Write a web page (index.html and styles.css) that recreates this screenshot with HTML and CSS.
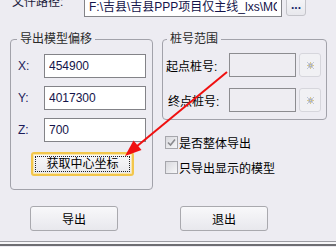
FILE: index.html
```html
<!DOCTYPE html>
<html lang="zh-CN">
<head>
    <meta charset="UTF-8">
    <title>导出模型</title>
    <link rel="stylesheet" href="styles.css">
</head>
<body>
    <div class="dialog">
        <div class="path-row">
            <span class="path-label">文件路径:</span>
            <input class="field path-field" type="text" value="F:\吉县\吉县PPP项目仅主线_lxs\MODEL\" readonly>
            <button class="btn browse">...</button>
        </div>
        <div class="groups">
            <fieldset class="group offset">
                <legend>导出模型偏移</legend>
                <div class="coord-row">
                    <span class="axis">X:</span>
                    <input class="field coord" type="text" value="454900">
                </div>
                <div class="coord-row">
                    <span class="axis">Y:</span>
                    <input class="field coord" type="text" value="4017300">
                </div>
                <div class="coord-row">
                    <span class="axis">Z:</span>
                    <input class="field coord" type="text" value="700">
                </div>
                <button class="btn focused center-btn"><span class="focus-ring">获取中心坐标</span></button>
            </fieldset>
            <div class="side">
                <fieldset class="group range">
                    <legend>桩号范围</legend>
                    <div class="range-row">
                        <span class="range-label">起点桩号:</span>
                        <input class="field range-field" type="text" disabled>
                        <button class="btn pick" disabled>
                            <svg width="7" height="7" viewBox="0 0 7 7">
                                <rect x="0" y="0" width="1" height="1" fill="#b8c4d8"/>
                                <rect x="6" y="0" width="1" height="1" fill="#b8c4d8"/>
                                <rect x="0" y="6" width="1" height="1" fill="#b8c4d8"/>
                                <rect x="6" y="6" width="1" height="1" fill="#b8c4d8"/>
                                <rect x="1" y="1" width="5" height="5" fill="#c9cbd3"/>
                                <rect x="3" y="0" width="1" height="7" fill="#d9c98e"/>
                                <rect x="0" y="3" width="7" height="1" fill="#d9c98e"/>
                                <rect x="2" y="2" width="3" height="3" fill="#a9b3c9"/>
                                <rect x="3" y="3" width="1" height="1" fill="#e6d9a0"/>
                            </svg>
                        </button>
                    </div>
                    <div class="range-row">
                        <span class="range-label end">终点桩号:</span>
                        <input class="field range-field" type="text" disabled>
                        <button class="btn pick" disabled>
                            <svg width="7" height="7" viewBox="0 0 7 7">
                                <rect x="0" y="0" width="1" height="1" fill="#b8c4d8"/>
                                <rect x="6" y="0" width="1" height="1" fill="#b8c4d8"/>
                                <rect x="0" y="6" width="1" height="1" fill="#b8c4d8"/>
                                <rect x="6" y="6" width="1" height="1" fill="#b8c4d8"/>
                                <rect x="1" y="1" width="5" height="5" fill="#c9cbd3"/>
                                <rect x="3" y="0" width="1" height="7" fill="#d9c98e"/>
                                <rect x="0" y="3" width="7" height="1" fill="#d9c98e"/>
                                <rect x="2" y="2" width="3" height="3" fill="#a9b3c9"/>
                                <rect x="3" y="3" width="1" height="1" fill="#e6d9a0"/>
                            </svg>
                        </button>
                    </div>
                </fieldset>
                <label class="check">
                    <span class="box">
                        <svg width="11" height="11" viewBox="0 0 11 11">
                            <path d="M2 5.5 L4.5 8 L9 2.5" fill="none" stroke="#8a8a8e" stroke-width="1.6"/>
                        </svg>
                    </span>
                    是否整体导出
                </label>
                <label class="check">
                    <span class="box"></span>
                    只导出显示的模型
                </label>
            </div>
        </div>
        <div class="actions">
            <button class="btn action">导出</button>
            <button class="btn action">退出</button>
        </div>
        <div class="status"></div>
    </div>

    <!-- annotation arrow drawn over the dialog -->
    <svg class="arrow" width="336" height="247" viewBox="0 0 336 247">
        <line x1="227" y1="72" x2="136" y2="147" stroke="#f01010" stroke-width="2"/>
        <polygon points="125,156 133.5,140.5 141.5,150" fill="#f01010"/>
    </svg>
</body>
</html>
```

FILE: styles.css
```css
body {
    margin: 0;
    height: 247px;
    overflow: hidden;
    position: relative;
    background-color: #edecf2;
    font-family: "Liberation Sans", "Noto Sans CJK SC", sans-serif;
    font-size: 12px;
    color: #000;
}
.dialog {
    padding-left: 10px;
}
.path-row {
    display: flex;
    align-items: center;
    height: 24px;
    margin-top: -7px;
    padding-left: 2px;
}
.path-label {
    align-self: flex-start;
    width: 72px;
    margin-top: 2px;
    line-height: 14px;
    color: #1a1a3a;
}
.field {
    box-sizing: border-box;
    height: 24px;
    margin: 0;
    padding: 0 4px;
    border: 1px solid #838388;
    background-color: #fff;
    font-family: "Liberation Sans", "Noto Sans CJK SC", sans-serif;
    font-size: 12px;
    color: #14144a;
    outline: none;
}
.path-field {
    width: 198px;
}
.btn {
    box-sizing: border-box;
    margin: 0;
    padding: 0;
    border: 1px solid #a9a9ae;
    border-radius: 3px;
    background: linear-gradient(#f8f8fa, #e8e8ed);
    font-family: "Liberation Sans", "Noto Sans CJK SC", sans-serif;
    font-size: 12px;
    color: #000;
}
.browse {
    width: 20px;
    height: 22px;
    margin-left: 4px;
    border-color: #c4c4ca;
    color: #1a2a6a;
    font-weight: bold;
    line-height: 14px;
}
.groups {
    display: flex;
    gap: 9px;
    margin-top: 15px;
}
.group {
    box-sizing: border-box;
    margin: 0;
    min-width: 0;
    border: 1px solid #a2a2aa;
    border-radius: 4px;
}
.group legend {
    padding: 0 3px;
    line-height: 14px;
    color: #2a2a2a;
}
.offset {
    width: 143px;
    padding: 8px 0 13px 7px;
}
.offset legend {
    margin-left: -1px;
}
.coord-row {
    display: flex;
    align-items: center;
    margin-bottom: 8px;
}
.coord-row:nth-child(4) {
    margin-bottom: 0;
}
.axis {
    width: 26px;
    color: #1c1c5a;
}
.coord {
    width: 102px;
}
.center-btn {
    display: block;
    width: 103px;
    height: 24px;
    margin: 10px 0 0 13px;
}
.focused {
    border: 2px solid #f2c64c;
    border-radius: 3px;
    box-shadow: inset 0 0 0 1px #fbe6a8;
    padding: 2px;
}
.focus-ring {
    display: block;
    height: 14px;
    line-height: 14px;
    border: 1px dotted #222;
}
.side {
    width: 165px;
    display: flex;
    flex-direction: column;
}
.range {
    width: 165px;
    padding: 7px 0 7px 3px;
}
.range legend {
    margin-left: 1px;
}
.range-row {
    display: flex;
    align-items: center;
}
.range-row + .range-row {
    margin-top: 11px;
}
.range-label {
    width: 63px;
}
.range-label.end {
    padding-left: 2px;
    width: 61px;
}
.range-field {
    width: 67px;
    background-color: #eeedf2;
    border-color: #8c8c90;
}
.pick {
    display: flex;
    align-items: center;
    justify-content: center;
    width: 22px;
    height: 24px;
    margin-left: 3px;
    border-color: #d6d6dc;
    background: #f1f1f4;
}
.check {
    display: flex;
    align-items: center;
    height: 16px;
    padding-left: 3px;
    margin-top: 9px;
}
.range + .check {
    margin-top: 14px;
}
.box {
    box-sizing: border-box;
    display: flex;
    align-items: center;
    justify-content: center;
    width: 13px;
    height: 13px;
    margin-right: 1px;
    border: 1px solid #a6a6ac;
    background: linear-gradient(135deg, #d9d9de, #f6f6f8);
}
.actions {
    display: flex;
    gap: 62px;
    margin-top: 16px;
    padding-left: 20px;
}
.action {
    width: 88px;
    height: 25px;
}
.status {
    height: 2px;
    margin: 10px 0 0 -10px;
    border-top: 1px solid #9c9ca2;
    border-bottom: 2px solid #6e6e72;
    background-color: #f6f6f8;
}
.arrow {
    position: absolute;
    left: 0;
    top: 0;
    pointer-events: none;
}
```
